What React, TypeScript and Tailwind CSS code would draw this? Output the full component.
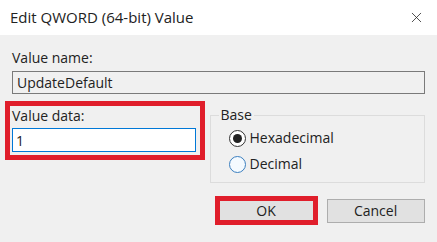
import { X } from "lucide-react";

export default function App() {
  return (
    <div className="w-[437px] h-[242px] bg-[#f0f0f0] text-[#000] font-['Open_Sans','Liberation_Sans',sans-serif] overflow-hidden">
      {/* Title bar */}
      <div className="h-[35px] bg-white flex items-center justify-between pl-[10px] pr-[12px]">
        <span className="text-[15px] leading-none text-[#222]">Edit QWORD (64-bit) Value</span>
        <X className="w-[17px] h-[17px] text-[#222]" strokeWidth={1.1} />
      </div>

      <div className="px-[12px] pt-[14px]">
        <div className="text-[14px] leading-[18px] text-[#222]">Value name:</div>
        <div className="mt-[4px] h-[23px] border border-[#7a7a7a] bg-[#f0f0f0] flex items-center px-[4px] text-[14px] text-[#222]">
          UpdateDefault
        </div>

        <div className="flex mt-[7px]">
          {/* Value data */}
          <div className="-ml-[7px] w-[200px] h-[59px] border-[5px] border-[#e01e2b] px-[2px] pt-[1px]">
            <div className="text-[14px] leading-[18px] text-[#222]">Value data:</div>
            <div className="mt-[3px] w-[184px] h-[24px] border border-[#0078d7] bg-white flex items-center px-[3px] text-[14px] text-[#222]">
              1
            </div>
          </div>

          {/* Base + buttons */}
          <div className="ml-[5px] w-[216px] flex flex-col">
            <fieldset className="border border-[#dcdcdc] h-[75px] mt-[7px] pl-[8px]">
              <legend className="px-[2px] text-[14px] leading-[14px] text-[#222]">Base</legend>
              <div className="flex items-center gap-[4px] mt-[7px] ml-[10px]">
                <span className="w-[17px] h-[17px] rounded-full border border-[#333] bg-white flex items-center justify-center">
                  <span className="w-[9px] h-[9px] rounded-full bg-[#222]" />
                </span>
                <span className="text-[14px] leading-[18px] text-[#222]">Hexadecimal</span>
              </div>
              <div className="flex items-center gap-[4px] mt-[8px] ml-[10px]">
                <span className="w-[17px] h-[17px] rounded-full border border-[#3b7fbf] bg-[#f4faff]" />
                <span className="text-[14px] leading-[18px] text-[#222]">Decimal</span>
              </div>
            </fieldset>

            <div className="flex items-center mt-[13px] ml-[5px]">
              <div className="w-[103px] h-[29px] border-[5px] border-[#e01e2b]">
                <div className="h-full bg-[#e1e1e1] flex items-center justify-center text-[14px] text-[#222]">OK</div>
              </div>
              <div className="ml-[9px] w-[98px] h-[24px] border border-[#adadad] bg-[#e1e1e1] flex items-center justify-center text-[14px] text-[#222]">
                Cancel
              </div>
            </div>
          </div>
        </div>
      </div>
    </div>
  );
}
